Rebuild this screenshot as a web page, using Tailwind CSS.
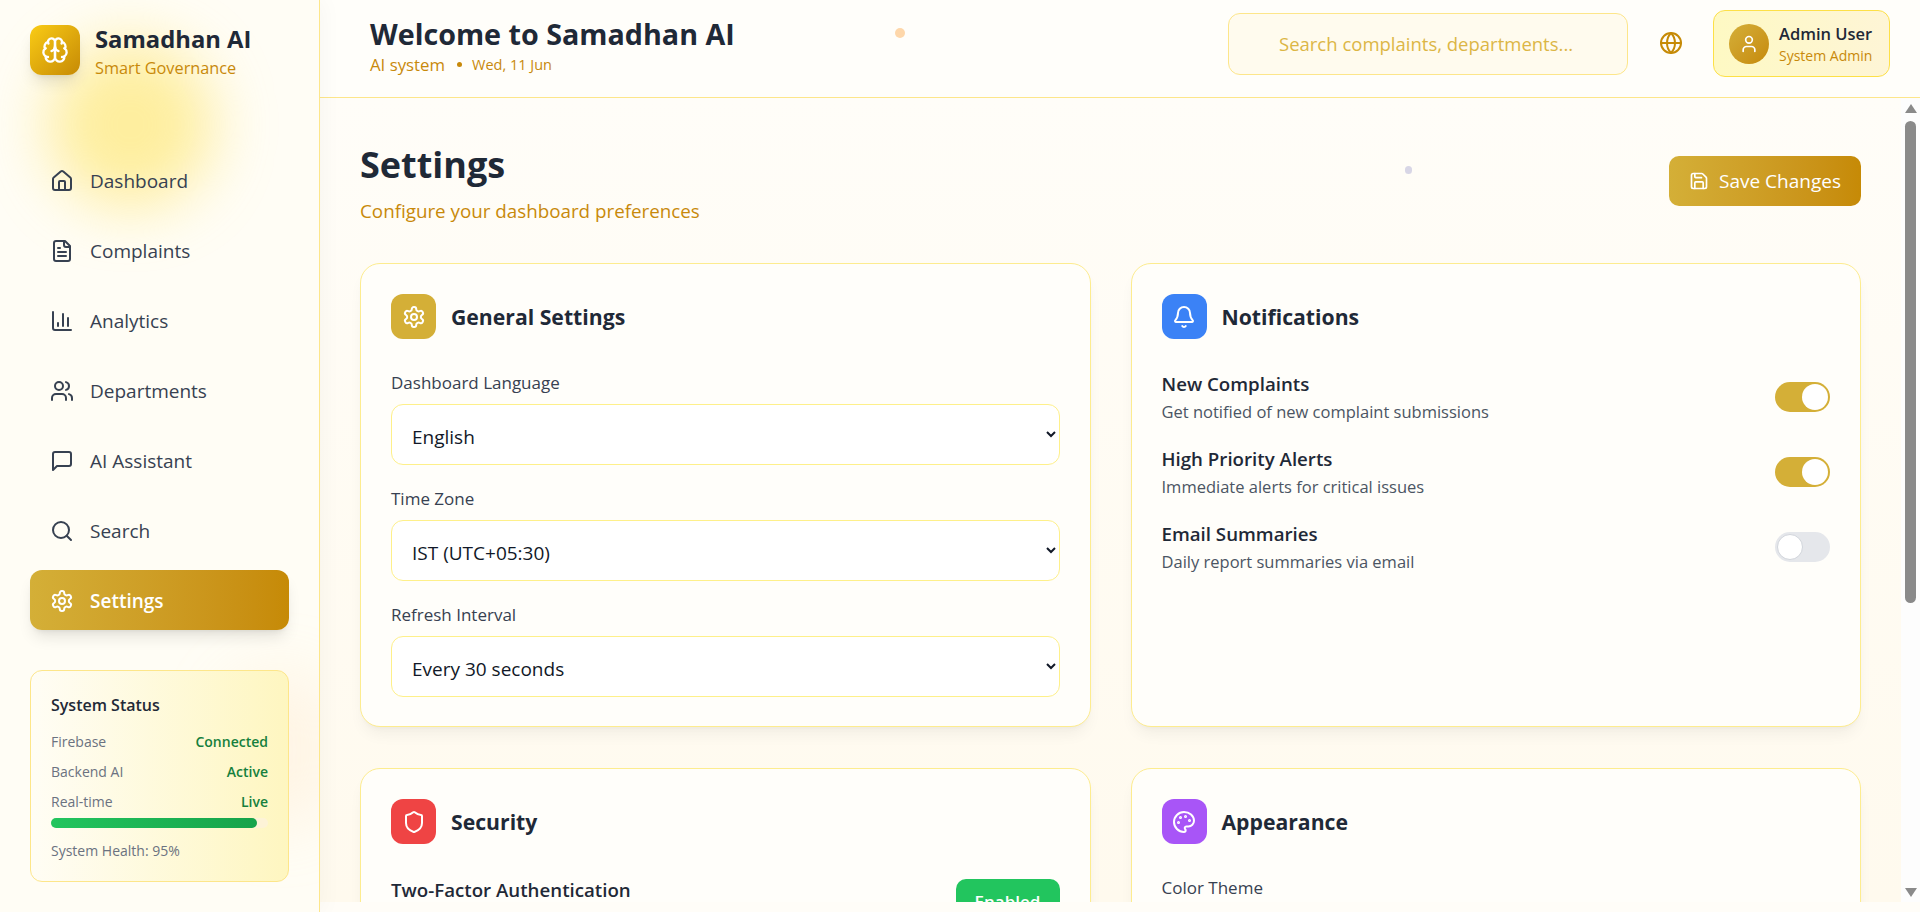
<!DOCTYPE html>
<html lang="en">
<head>
  <meta charset="UTF-8">
  <meta name="viewport" content="width=device-width, initial-scale=1.0">
  <title>Samadhan AI - Settings</title>
  <script src="https://cdn.jsdelivr.net/npm/@tailwindcss/browser@4"></script>
</head>
<body class="h-[912px] overflow-hidden flex bg-[#fffdf8] font-['Open_Sans','Noto_Sans',sans-serif] text-[#1f2937]">
  <!-- sidebar -->
  <aside class="relative z-10 w-[320px] shrink-0 h-full border-r border-[#fde68a] bg-[#fffdf5] shadow-[4px_0_20px_rgba(0,0,0,0.03)] overflow-hidden flex flex-col pt-[25px] px-[30px]">
    <div class="absolute left-[48px] top-[42px] w-[165px] h-[165px] rounded-full bg-[#fde047]/50 blur-[30px]"></div>
    <div class="absolute left-[220px] top-[670px] w-[120px] h-[160px] rounded-full bg-[#fed7aa]/20 blur-[30px]"></div>
    <div class="relative flex items-center gap-[15px] h-[50px]">
      <div class="w-[50px] h-[50px] rounded-xl bg-gradient-to-br from-[#facc15] to-[#c68a06] shadow-lg flex items-center justify-center text-white">
        <svg xmlns="http://www.w3.org/2000/svg" width="28" height="28" viewBox="0 0 24 24" fill="none" stroke="currentColor" stroke-width="2" stroke-linecap="round" stroke-linejoin="round"><path d="M12 5a3 3 0 1 0-5.997.125 4 4 0 0 0-2.526 5.77 4 4 0 0 0 .556 6.588A4 4 0 1 0 12 18Z"/><path d="M12 5a3 3 0 1 1 5.997.125 4 4 0 0 1 2.526 5.77 4 4 0 0 1-.556 6.588A4 4 0 1 1 12 18Z"/><path d="M15 13a4.5 4.5 0 0 1-3-4 4.5 4.5 0 0 1-3 4"/><path d="M17.599 6.5a3 3 0 0 0 .399-1.375"/><path d="M6.003 5.125A3 3 0 0 0 6.401 6.5"/><path d="M3.477 10.896a4 4 0 0 1 .585-.396"/><path d="M19.938 10.5a4 4 0 0 1 .585.396"/><path d="M6 18a4 4 0 0 1-1.967-.516"/><path d="M19.967 17.484A4 4 0 0 1 18 18"/></svg>
      </div>
      <div class="mt-[4px]">
        <div class="text-[23.8px] leading-[30px] font-bold whitespace-nowrap">Samadhan AI</div>
        <div class="mt-[2px] text-[16.3px] leading-[25px] text-[#c8890a] whitespace-nowrap">Smart Governance</div>
      </div>
    </div>
    <nav class="relative mt-[75px] flex flex-col gap-[10px]">
      <a class="h-[60px] px-[20px] pt-[2px] flex items-center gap-[16px] text-[19px] font-medium text-[#374151]">
        <svg xmlns="http://www.w3.org/2000/svg" width="24" height="24" viewBox="0 0 24 24" fill="none" stroke="currentColor" stroke-width="2" stroke-linecap="round" stroke-linejoin="round"><path d="M15 21v-8a1 1 0 0 0-1-1h-4a1 1 0 0 0-1 1v8"/><path d="M3 10a2 2 0 0 1 .709-1.528l7-5.999a2 2 0 0 1 2.582 0l7 5.999A2 2 0 0 1 21 10v9a2 2 0 0 1-2 2H5a2 2 0 0 1-2-2z"/></svg>
        Dashboard
      </a>
      <a class="h-[60px] px-[20px] pt-[2px] flex items-center gap-[16px] text-[19px] font-medium text-[#374151]">
        <svg xmlns="http://www.w3.org/2000/svg" width="24" height="24" viewBox="0 0 24 24" fill="none" stroke="currentColor" stroke-width="2" stroke-linecap="round" stroke-linejoin="round"><path d="M15 2H6a2 2 0 0 0-2 2v16a2 2 0 0 0 2 2h12a2 2 0 0 0 2-2V7Z"/><path d="M14 2v4a2 2 0 0 0 2 2h4"/><path d="M10 9H8"/><path d="M16 13H8"/><path d="M16 17H8"/></svg>
        Complaints
      </a>
      <a class="h-[60px] px-[20px] pt-[2px] flex items-center gap-[16px] text-[19px] font-medium text-[#374151]">
        <svg xmlns="http://www.w3.org/2000/svg" width="24" height="24" viewBox="0 0 24 24" fill="none" stroke="currentColor" stroke-width="2" stroke-linecap="round" stroke-linejoin="round"><path d="M3 3v16a2 2 0 0 0 2 2h16"/><path d="M18 17V9"/><path d="M13 17V5"/><path d="M8 17v-3"/></svg>
        Analytics
      </a>
      <a class="h-[60px] px-[20px] pt-[2px] flex items-center gap-[16px] text-[19px] font-medium text-[#374151]">
        <svg xmlns="http://www.w3.org/2000/svg" width="24" height="24" viewBox="0 0 24 24" fill="none" stroke="currentColor" stroke-width="2" stroke-linecap="round" stroke-linejoin="round"><path d="M16 21v-2a4 4 0 0 0-4-4H6a4 4 0 0 0-4 4v2"/><circle cx="9" cy="7" r="4"/><path d="M22 21v-2a4 4 0 0 0-3-3.87"/><path d="M16 3.13a4 4 0 0 1 0 7.75"/></svg>
        Departments
      </a>
      <a class="h-[60px] px-[20px] pt-[2px] flex items-center gap-[16px] text-[19px] font-medium text-[#374151]">
        <svg xmlns="http://www.w3.org/2000/svg" width="24" height="24" viewBox="0 0 24 24" fill="none" stroke="currentColor" stroke-width="2" stroke-linecap="round" stroke-linejoin="round"><path d="M21 15a2 2 0 0 1-2 2H7l-4 4V5a2 2 0 0 1 2-2h14a2 2 0 0 1 2 2z"/></svg>
        AI Assistant
      </a>
      <a class="h-[60px] px-[20px] pt-[2px] flex items-center gap-[16px] text-[19px] font-medium text-[#374151]">
        <svg xmlns="http://www.w3.org/2000/svg" width="24" height="24" viewBox="0 0 24 24" fill="none" stroke="currentColor" stroke-width="2" stroke-linecap="round" stroke-linejoin="round"><circle cx="11" cy="11" r="8"/><path d="m21 21-4.3-4.3"/></svg>
        Search
      </a>
      <a class="h-[60px] px-[20px] pt-[2px] flex items-center gap-[16px] text-[19px] font-semibold text-white rounded-xl bg-gradient-to-r from-[#d4af37] to-[#c68a06] shadow-lg">
        <svg xmlns="http://www.w3.org/2000/svg" width="24" height="24" viewBox="0 0 24 24" fill="none" stroke="currentColor" stroke-width="2" stroke-linecap="round" stroke-linejoin="round"><path d="M12.22 2h-.44a2 2 0 0 0-2 2v.18a2 2 0 0 1-1 1.73l-.43.25a2 2 0 0 1-2 0l-.15-.08a2 2 0 0 0-2.73.73l-.22.38a2 2 0 0 0 .73 2.73l.15.1a2 2 0 0 1 1 1.72v.51a2 2 0 0 1-1 1.74l-.15.09a2 2 0 0 0-.73 2.73l.22.38a2 2 0 0 0 2.73.73l.15-.08a2 2 0 0 1 2 0l.43.25a2 2 0 0 1 1 1.73V20a2 2 0 0 0 2 2h.44a2 2 0 0 0 2-2v-.18a2 2 0 0 1 1-1.73l.43-.25a2 2 0 0 1 2 0l.15.08a2 2 0 0 0 2.73-.73l.22-.39a2 2 0 0 0-.73-2.73l-.15-.08a2 2 0 0 1-1-1.74v-.5a2 2 0 0 1 1-1.74l.15-.09a2 2 0 0 0 .73-2.73l-.22-.38a2 2 0 0 0-2.73-.73l-.15.08a2 2 0 0 1-2 0l-.43-.25a2 2 0 0 1-1-1.73V4a2 2 0 0 0-2-2z"/><circle cx="12" cy="12" r="3"/></svg>
        Settings
      </a>
    </nav>
    <div class="relative mt-[40px] h-[212px] rounded-xl border border-[#fde68a] bg-gradient-to-r from-[#fffdf5] to-[#fef6c0] px-[20px] pt-[20px]">
      <div class="text-[16px] leading-[28px] font-semibold">System Status</div>
      <div class="mt-[8px] flex justify-between text-[14px] leading-[30px] text-[#6b7280]"><span>Firebase</span><span class="font-semibold text-[#15803d]">Connected</span></div>
      <div class="flex justify-between text-[14px] leading-[30px] text-[#6b7280]"><span>Backend AI</span><span class="font-semibold text-[#15803d]">Active</span></div>
      <div class="flex justify-between text-[14px] leading-[30px] text-[#6b7280]"><span>Real-time</span><span class="font-semibold text-[#15803d]">Live</span></div>
      <div class="mt-[1px] h-[10px] rounded-full bg-[#fdf3d7]">
        <div class="h-full w-[95%] rounded-full bg-gradient-to-r from-[#22c55e] to-[#16a34a]"></div>
      </div>
      <div class="mt-[12px] text-[14px] leading-[22px] text-[#6b7280]">System Health: 95%</div>
    </div>
  </aside>

  <div class="flex-1 min-w-0 h-full flex flex-col">
    <!-- top bar -->
    <header class="relative h-[98px] shrink-0 border-b border-[#fde68a] bg-[#fffefa] flex items-center pl-[50px] pr-[30px]">
      <div class="flex-1 -translate-y-[3px]">
        <h1 class="text-[28.7px] leading-[38px] font-bold whitespace-nowrap">Welcome to Samadhan AI</h1>
        <div class="flex items-center gap-[12px] text-[#c8890a] whitespace-nowrap">
          <span class="text-[16.8px] leading-[24px]">AI system</span>
          <span class="w-[5px] h-[5px] -mr-[2px] rounded-full bg-[#c8890a]"></span>
          <span class="text-[14.5px] leading-[24px]">Wed, 11 Jun</span>
        </div>
      </div>
      <span class="absolute left-[575px] top-[28px] w-[10px] h-[10px] rounded-full bg-[#fed7aa]"></span>
      <input type="text" placeholder="Search complaints, departments..." class="w-[400px] h-[62px] -translate-y-[5px] rounded-xl border border-[#fde68a] bg-[#fffbee] pl-[50px] pr-[40px] text-[18.5px] outline-none placeholder:text-[#dcb645]">
      <svg class="ml-[31px] -translate-y-[6px] text-[#c68a06]" xmlns="http://www.w3.org/2000/svg" width="24" height="24" viewBox="0 0 24 24" fill="none" stroke="currentColor" stroke-width="2" stroke-linecap="round" stroke-linejoin="round"><circle cx="12" cy="12" r="10"/><path d="M12 2a14.5 14.5 0 0 0 0 20 14.5 14.5 0 0 0 0-20"/><path d="M2 12h20"/></svg>
      <div class="ml-[30px] w-[177px] h-[67px] -translate-y-[5px] rounded-xl border border-[#fde047] bg-gradient-to-r from-[#fef9c3] to-[#fef5d6] flex items-center pl-[15px] gap-[10px] whitespace-nowrap">
        <div class="w-[40px] h-[40px] rounded-full bg-gradient-to-br from-[#d4af37] to-[#c68a06] flex items-center justify-center text-white">
          <svg xmlns="http://www.w3.org/2000/svg" width="20" height="20" viewBox="0 0 24 24" fill="none" stroke="currentColor" stroke-width="2" stroke-linecap="round" stroke-linejoin="round"><path d="M19 21v-2a4 4 0 0 0-4-4H9a4 4 0 0 0-4 4v2"/><circle cx="12" cy="7" r="4"/></svg>
        </div>
        <div class="pt-[1px]">
          <div class="text-[16.5px] leading-[24px] font-semibold">Admin User</div>
          <div class="text-[14px] leading-[20px] text-[#c8890a]">System Admin</div>
        </div>
      </div>
    </header>

    <div class="flex h-[804px] shrink-0">
      <!-- settings content, cut off by the scroll area -->
      <main class="relative flex-1 min-w-0 overflow-hidden bg-gradient-to-b from-[#fffdf8] to-[#fffaee] pl-[40px] pr-[40px]">
        <span class="absolute left-[1085px] top-[68px] w-[7px] h-[8px] rounded-full bg-[#d8d6e6]"></span>
        <div class="flex items-center justify-between pt-[26px] h-[165px] pb-[25px]">
          <div>
            <h2 class="text-[36px] leading-[54px] font-bold">Settings</h2>
            <p class="mt-[5px] text-[18.8px] leading-[28px] text-[#c8890a]">Configure your dashboard preferences</p>
          </div>
          <button class="w-[192px] h-[50px] rounded-[10px] bg-gradient-to-r from-[#d4af37] to-[#c68a06] text-white text-[19px] font-medium flex items-center justify-center gap-[10px]">
            <svg xmlns="http://www.w3.org/2000/svg" width="20" height="20" viewBox="0 0 24 24" fill="none" stroke="currentColor" stroke-width="2" stroke-linecap="round" stroke-linejoin="round"><path d="M15.2 3a2 2 0 0 1 1.4.6l3.8 3.8a2 2 0 0 1 .6 1.4V19a2 2 0 0 1-2 2H5a2 2 0 0 1-2-2V5a2 2 0 0 1 2-2z"/><path d="M17 21v-7a1 1 0 0 0-1-1H8a1 1 0 0 0-1 1v7"/><path d="M7 3v4a1 1 0 0 0 1 1h7"/></svg>
            Save Changes
          </button>
        </div>
        <div class="grid grid-cols-2 gap-x-[40px] gap-y-[41px]">
          <!-- general -->
          <section class="h-[464px] rounded-[20px] border border-[#fdec8f] bg-[#fffefa] shadow-lg shadow-black/5 p-[30px]">
            <div class="flex items-center gap-[15px] h-[45px]">
              <div class="w-[45px] h-[45px] rounded-xl bg-[#d4af37] flex items-center justify-center text-white">
                <svg xmlns="http://www.w3.org/2000/svg" width="24" height="24" viewBox="0 0 24 24" fill="none" stroke="currentColor" stroke-width="2" stroke-linecap="round" stroke-linejoin="round"><path d="M12.22 2h-.44a2 2 0 0 0-2 2v.18a2 2 0 0 1-1 1.73l-.43.25a2 2 0 0 1-2 0l-.15-.08a2 2 0 0 0-2.73.73l-.22.38a2 2 0 0 0 .73 2.73l.15.1a2 2 0 0 1 1 1.72v.51a2 2 0 0 1-1 1.74l-.15.09a2 2 0 0 0-.73 2.73l.22.38a2 2 0 0 0 2.73.73l.15-.08a2 2 0 0 1 2 0l.43.25a2 2 0 0 1 1 1.73V20a2 2 0 0 0 2 2h.44a2 2 0 0 0 2-2v-.18a2 2 0 0 1 1-1.73l.43-.25a2 2 0 0 1 2 0l.15.08a2 2 0 0 0 2.73-.73l.22-.39a2 2 0 0 0-.73-2.73l-.15-.08a2 2 0 0 1-1-1.74v-.5a2 2 0 0 1 1-1.74l.15-.09a2 2 0 0 0 .73-2.73l-.22-.38a2 2 0 0 0-2.73-.73l-.15.08a2 2 0 0 1-2 0l-.43-.25a2 2 0 0 1-1-1.73V4a2 2 0 0 0-2-2z"/><circle cx="12" cy="12" r="3"/></svg>
              </div>
              <h3 class="text-[21.2px] font-bold">General Settings</h3>
            </div>
            <div class="mt-[32px] flex flex-col gap-[22px]">
              <div>
                <label class="block text-[17px] leading-[24px] font-medium text-[#374151] mb-[9px]">Dashboard Language</label>
                <select class="block w-full h-[61px] rounded-xl border border-[#fef08a] bg-white pl-[16px] pr-[19px] pt-[4px] text-[19px] text-[#111827]"><option>English</option></select>
              </div>
              <div>
                <label class="block text-[17px] leading-[24px] font-medium text-[#374151] mb-[9px]">Time Zone</label>
                <select class="block w-full h-[61px] rounded-xl border border-[#fef08a] bg-white pl-[16px] pr-[19px] pt-[4px] text-[19px] text-[#111827]"><option>IST (UTC+05:30)</option></select>
              </div>
              <div>
                <label class="block text-[17px] leading-[24px] font-medium text-[#374151] mb-[9px]">Refresh Interval</label>
                <select class="block w-full h-[61px] rounded-xl border border-[#fef08a] bg-white pl-[16px] pr-[19px] pt-[4px] text-[19px] text-[#111827]"><option>Every 30 seconds</option></select>
              </div>
            </div>
          </section>
          <!-- notifications -->
          <section class="h-[464px] rounded-[20px] border border-[#fdec8f] bg-[#fffefa] shadow-lg shadow-black/5 p-[30px]">
            <div class="flex items-center gap-[15px] h-[45px]">
              <div class="w-[45px] h-[45px] rounded-xl bg-[#3b82f6] flex items-center justify-center text-white">
                <svg xmlns="http://www.w3.org/2000/svg" width="24" height="24" viewBox="0 0 24 24" fill="none" stroke="currentColor" stroke-width="2" stroke-linecap="round" stroke-linejoin="round"><path d="M10.268 21a2 2 0 0 0 3.464 0"/><path d="M3.262 15.326A1 1 0 0 0 4 17h16a1 1 0 0 0 .74-1.673C19.41 13.956 18 12.499 18 8A6 6 0 0 0 6 8c0 4.499-1.411 5.956-2.738 7.326"/></svg>
              </div>
              <h3 class="text-[21.2px] font-bold">Notifications</h3>
            </div>
            <div class="mt-[31px] flex flex-col gap-[19px]">
              <div class="flex items-center justify-between h-[56px]">
                <div>
                  <div class="text-[18.7px] leading-[28px] font-semibold">New Complaints</div>
                  <div class="text-[16.5px] leading-[28px] text-[#4b5563]">Get notified of new complaint submissions</div>
                </div>
                <div class="w-[55px] h-[30px] -translate-y-[1px] rounded-full bg-[#d4af37] p-[2px] flex justify-end"><div class="w-[26px] h-[26px] rounded-full bg-white"></div></div>
              </div>
              <div class="flex items-center justify-between h-[56px]">
                <div>
                  <div class="text-[18.7px] leading-[28px] font-semibold">High Priority Alerts</div>
                  <div class="text-[16.5px] leading-[28px] text-[#4b5563]">Immediate alerts for critical issues</div>
                </div>
                <div class="w-[55px] h-[30px] -translate-y-[1px] rounded-full bg-[#d4af37] p-[2px] flex justify-end"><div class="w-[26px] h-[26px] rounded-full bg-white"></div></div>
              </div>
              <div class="flex items-center justify-between h-[56px]">
                <div>
                  <div class="text-[18.7px] leading-[28px] font-semibold">Email Summaries</div>
                  <div class="text-[16.5px] leading-[28px] text-[#4b5563]">Daily report summaries via email</div>
                </div>
                <div class="w-[55px] h-[30px] -translate-y-[1px] rounded-full bg-[#e5e7eb] p-[2px] flex justify-start"><div class="w-[26px] h-[26px] rounded-full bg-white border border-[#d1d5db]"></div></div>
              </div>
            </div>
          </section>
          <!-- security -->
          <section class="h-[300px] rounded-[20px] border border-[#fdec8f] bg-[#fffefa] shadow-lg shadow-black/5 p-[30px]">
            <div class="flex items-center gap-[15px] h-[45px]">
              <div class="w-[45px] h-[45px] rounded-xl bg-[#ef4444] flex items-center justify-center text-white">
                <svg xmlns="http://www.w3.org/2000/svg" width="24" height="24" viewBox="0 0 24 24" fill="none" stroke="currentColor" stroke-width="2" stroke-linecap="round" stroke-linejoin="round"><path d="M20 13c0 5-3.5 7.5-7.66 8.95a1 1 0 0 1-.67-.01C7.5 20.5 4 18 4 13V6a1 1 0 0 1 1-1c2 0 4.5-1.2 6.24-2.72a1.17 1.17 0 0 1 1.52 0C14.51 3.81 17 5 19 5a1 1 0 0 1 1 1z"/></svg>
              </div>
              <h3 class="text-[21.2px] font-bold">Security</h3>
            </div>
            <div class="mt-[32px] flex items-start justify-between">
              <div class="text-[18.7px] leading-[28px] font-semibold">Two-Factor Authentication</div>
              <button class="mt-[3px] w-[104px] h-[46px] rounded-[10px] bg-[#22c55e] text-white text-[17px] font-semibold">Enabled</button>
            </div>
          </section>
          <!-- appearance -->
          <section class="h-[300px] rounded-[20px] border border-[#fdec8f] bg-[#fffefa] shadow-lg shadow-black/5 p-[30px]">
            <div class="flex items-center gap-[15px] h-[45px]">
              <div class="w-[45px] h-[45px] rounded-xl bg-[#a855f7] flex items-center justify-center text-white">
                <svg xmlns="http://www.w3.org/2000/svg" width="24" height="24" viewBox="0 0 24 24" fill="none" stroke="currentColor" stroke-width="2" stroke-linecap="round" stroke-linejoin="round"><circle cx="13.5" cy="6.5" r=".5" fill="currentColor"/><circle cx="17.5" cy="10.5" r=".5" fill="currentColor"/><circle cx="8.5" cy="7.5" r=".5" fill="currentColor"/><circle cx="6.5" cy="12.5" r=".5" fill="currentColor"/><path d="M12 2C6.5 2 2 6.5 2 12s4.5 10 10 10c.926 0 1.648-.746 1.648-1.688 0-.437-.18-.835-.437-1.125-.29-.289-.438-.652-.438-1.125a1.64 1.64 0 0 1 1.668-1.668h1.996c3.051 0 5.555-2.503 5.555-5.554C21.965 6.012 17.461 2 12 2z"/></svg>
              </div>
              <h3 class="text-[21.2px] font-bold">Appearance</h3>
            </div>
            <div class="mt-[32px] text-[17px] leading-[24px] font-medium text-[#374151]">Color Theme</div>
          </section>
        </div>
      </main>
      <!-- scrollbar -->
      <div class="w-[19px] shrink-0 bg-[#fdfdfd] relative">
        <span class="absolute left-[4px] top-[6px] w-0 h-0 border-x-[6px] border-x-transparent border-b-[9px] border-b-[#8a8a8a]"></span>
        <span class="absolute left-[4px] top-[23px] w-[11px] h-[482px] rounded-full bg-[#8a8a8a]"></span>
        <span class="absolute left-[4px] bottom-[5px] w-0 h-0 border-x-[6px] border-x-transparent border-t-[9px] border-t-[#8a8a8a]"></span>
      </div>
    </div>
    <div class="h-[10px] shrink-0 bg-[#fffdf8]"></div>
  </div>
</body>
</html>
